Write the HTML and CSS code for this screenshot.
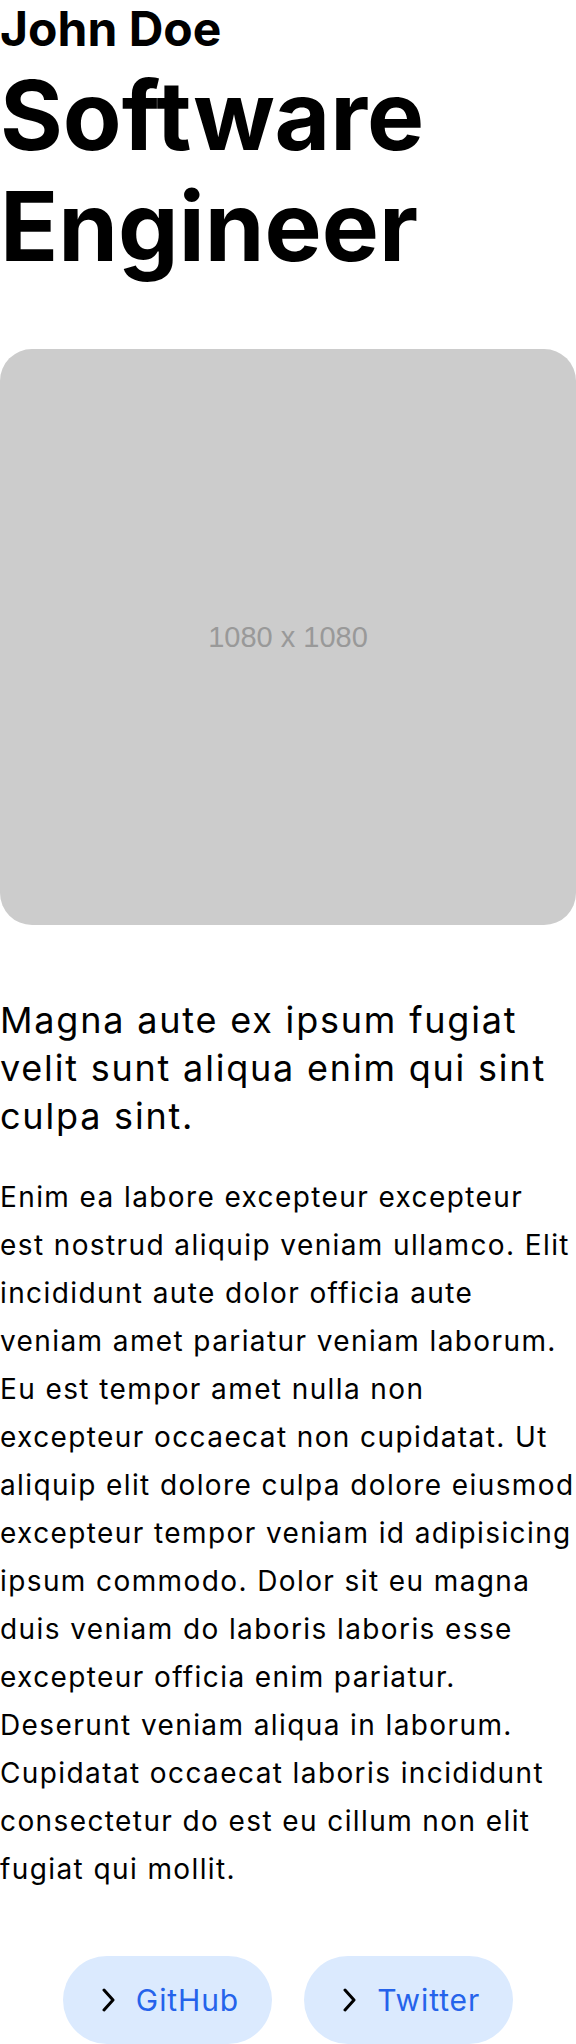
FILE: index.html
```html
<!DOCTYPE html>
<html lang="en">
<head>
<meta charset="utf-8">
<title>John Doe — Software Engineer</title>
<link rel="stylesheet" href="styles.css">
</head>
<body>
<main class="page">
  <header class="intro">
    <h2 class="name">John Doe</h2>
    <h1 class="role">Software Engineer</h1>
  </header>
  <div class="photo"><span class="photo-label">1080 x 1080</span></div>
  <p class="lead">Magna aute ex ipsum fugiat velit sunt aliqua enim qui sint culpa sint.</p>
  <p class="body">Enim ea labore excepteur excepteur<br>
est nostrud aliquip veniam ullamco. Elit<br>
incididunt aute dolor officia aute<br>
veniam amet pariatur veniam laborum.<br>
Eu est tempor amet nulla non<br>
excepteur occaecat non cupidatat. Ut<br>
aliquip elit dolore culpa dolore eiusmod<br>
excepteur tempor veniam id adipisicing<br>
ipsum commodo. Dolor sit eu magna<br>
duis veniam do laboris laboris esse<br>
excepteur officia enim pariatur.<br>
Deserunt veniam aliqua in laborum.<br>
Cupidatat occaecat laboris incididunt<br>
consectetur do est eu cillum non elit<br>
fugiat qui mollit.</p>
  <nav class="links">
    <a class="pill" href="#">
      <svg class="chev" width="16" height="24" viewBox="0 0 16 24" aria-hidden="true"><polyline points="3,2 12,12 3,22" fill="none" stroke="#000" stroke-width="3" stroke-linecap="round" stroke-linejoin="round"/></svg>
      <span>GitHub</span>
    </a>
    <a class="pill" href="#">
      <svg class="chev" width="16" height="24" viewBox="0 0 16 24" aria-hidden="true"><polyline points="3,2 12,12 3,22" fill="none" stroke="#000" stroke-width="3" stroke-linecap="round" stroke-linejoin="round"/></svg>
      <span>Twitter</span>
    </a>
  </nav>
</main>
</body>
</html>
```

FILE: styles.css
```css
html, body {
  margin: 0;
  padding: 0;
  background: #ffffff;
}

body {
  font-family: Inter, "Noto Sans", sans-serif;
  color: #000000;
}

.page {
  display: flex;
  flex-direction: column;
}

.intro {
  display: flex;
  flex-direction: column;
}

.name {
  margin: 0;
  font-weight: 700;
  font-size: 48px;
  line-height: 57px;
}

.role {
  margin: 3px 0 0;
  font-weight: 700;
  font-size: 96px;
  line-height: 111px;
}

.photo {
  margin-top: 67px;
  width: 576px;
  height: 576px;
  border-radius: 32px;
  background: #cccccc;
  display: flex;
  align-items: center;
  justify-content: center;
}

.photo-label {
  font-family: "Liberation Sans", Arial, sans-serif;
  font-size: 29px;
  color: #999999;
}

.lead {
  margin: 71px 0 0;
  font-size: 36px;
  line-height: 48px;
  letter-spacing: 0.05em;
}

.body {
  margin: 33px 0 0;
  font-size: 28px;
  line-height: 48px;
  letter-spacing: 0.05em;
  white-space: nowrap;
}

.links {
  margin-top: 63px;
  display: flex;
  justify-content: center;
  gap: 32px;
}

.pill {
  display: inline-flex;
  align-items: center;
  gap: 19px;
  height: 88px;
  padding: 0 33px 0 38px;
  border-radius: 9999px;
  background: #dbeafe;
  color: #2563eb;
  text-decoration: none;
  font-size: 30px;
  letter-spacing: 0.03em;
}

.chev {
  flex: none;
  display: block;
}
```
